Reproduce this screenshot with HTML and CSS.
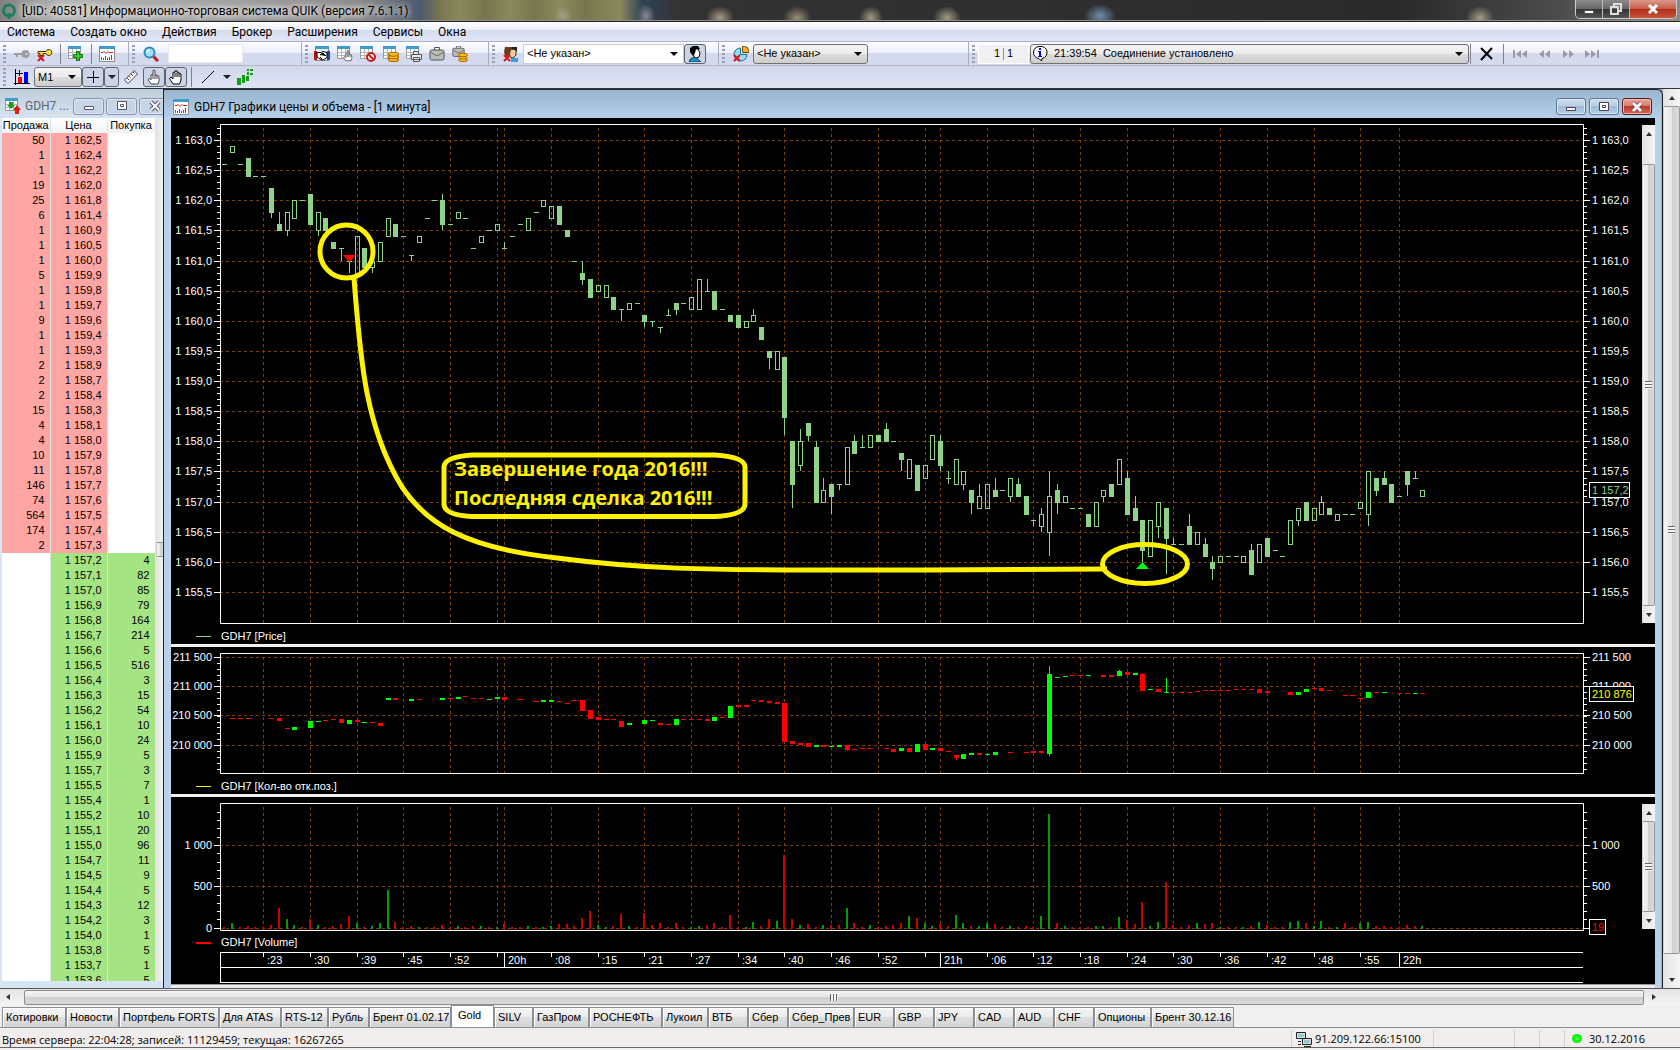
FILE: index.html
```html
<!DOCTYPE html>
<html lang="ru">
<head>
<meta charset="utf-8">
<title>QUIK</title>
<link rel="stylesheet" href="styles.css">
</head>
<body>
<svg class="defs" width="0" height="0" aria-hidden="true">
  <symbol id="i-chart" viewBox="0 0 16 16"><path fill="#fff" stroke="#8a8a8a" d="M.5.5h15v15H.5z"/><path fill="#3c9cd0" d="M0 0h16v3H0z"/><path fill="none" stroke="#d01818" d="M2 6.500h2l1-1 2 2 2-2 1 1h4"/><path stroke="#2060c0" d="M2.500 14v-3M4.500 14v-2M6.500 14v-4M8.500 14v-2M10.500 14v-3M12.500 14v-5"/></symbol>
  <symbol id="i-table" viewBox="0 0 16 16"><path fill="#fff" stroke="#9a9a9a" d="M.5.5h12v12H.5z"/><path fill="#3c9cd0" d="M0 0h13v3H0z"/><path stroke="#b4b4b4" d="M1 6.500h11M1 9.500h11M4.500 3v9M8.500 3v9"/></symbol>
  <symbol id="i-coins" viewBox="0 0 10 10"><g fill="#ffc01e" stroke="#a86400"><ellipse cx="5" cy="8" rx="4.500" ry="1.600"/><ellipse cx="5" cy="5.500" rx="4.500" ry="1.600"/><ellipse cx="5" cy="3" rx="4.500" ry="1.800"/></g></symbol>
  <symbol id="i-case" viewBox="0 0 16 16"><path fill="none" stroke="#555" d="M5.500 4V1.500h5V4"/><rect x="1" y="4" width="14" height="10" rx="1.500" fill="#b9bfb6" stroke="#555"/><path fill="none" stroke="#666" d="M1 6l7 4 7-4"/></symbol>
  <symbol id="i-redx" viewBox="0 0 8 8"><path stroke="#d8141c" stroke-width="2" d="M1 1l6 6M7 1L1 7"/></symbol>
  <symbol id="i-palm" viewBox="0 0 16 16"><path fill="#fff" stroke="#000" d="M5 15L1.500 9.500 3 8l2 2V3.500q1-1 2 0V2q1-1 2 0v1.500q1-1 2 0V5q1-1 2 0v6L11.500 15z"/><path stroke="#000" d="M7 4v4M9 4v4M11 5v3"/></symbol>
  <symbol id="i-finger" viewBox="0 0 16 16"><path fill="#fff" stroke="#444" d="M5 15L2 10.500 3.500 9.500 5 11V6q1-1 2 0V1.500q1-1 2 0V6l2 .5q2 0 2 2V12l-1 3z"/><path stroke="#444" d="M7 6v4M9 6v4M11 7v3"/></symbol>
</svg>

<header class="titlebar">
  <svg class="logo" viewBox="0 0 16 16" aria-hidden="true"><circle cx="8" cy="7.500" r="5.500" fill="none" stroke="#1f8060" stroke-width="3"/><path stroke="#1f8060" stroke-width="3" d="M8 10v6"/></svg>
  <h1>[UID: 40581] Информационно-торговая система QUIK (версия 7.6.1.1)</h1>
  <div class="caption">
    <button aria-label="Свернуть"><svg viewBox="0 0 16 12"><path fill="#fff" stroke="#555" d="M3.500 7.500h9v3h-9z"/></svg></button>
    <button aria-label="Восстановить"><svg viewBox="0 0 16 12"><path fill="none" stroke="#ddd" stroke-width="2" d="M6 3V1h7v7h-2M3 4h7v7H3z"/></svg></button>
    <button class="close" aria-label="Закрыть"><svg viewBox="0 0 16 12"><path stroke="#fff" stroke-width="3" d="M4 2l8 8M12 2l-8 8"/></svg></button>
  </div>
</header>

<nav class="menu">
  <a href="#">Система</a><a href="#">Создать окно</a><a href="#">Действия</a><a href="#">Брокер</a><a href="#">Расширения</a><a href="#">Сервисы</a><a href="#">Окна</a>
</nav>

<div class="toolbar">
  <div class="group g-keys">
    <button aria-label="Подключить"><svg viewBox="0 0 16 16"><path fill="#9d9d9d" d="M0 7h8v2H4v2H2V9H0z"/><circle cx="11.500" cy="8" r="4" fill="#9d9d9d"/><circle cx="12.500" cy="8" r="1" fill="#dde"/></svg></button>
    <button aria-label="Отключить"><svg viewBox="0 0 16 16"><path fill="#ffe040" stroke="#443300" d="M1 5.500h8a3 3 0 1 1 0 2H6v2H3v-2H1z"/><use href="#i-redx" x="0" y="8" width="8" height="8"/></svg></button>
    <i class="sep"></i>
    <button aria-label="Создать таблицу"><svg viewBox="0 0 16 16"><use href="#i-table" width="16" height="16"/><path fill="#3cc832" stroke="#0c6e0c" d="M8.500 5.500h3v3h3v3h-3v3h-3v-3h-3v-3h3z"/></svg></button>
    <i class="sep"></i>
    <button aria-label="Создать график"><svg viewBox="0 0 16 16"><use href="#i-chart" width="16" height="16"/></svg></button>
  </div>
  <div class="group g-find">
    <svg class="ico" viewBox="0 0 16 16"><path stroke="#c01818" stroke-width="3" d="M10 10l5 5"/><circle cx="6.500" cy="6.500" r="5" fill="#9fe2fa" stroke="#2a8cc0" stroke-width="2"/><path stroke="#fff" stroke-width="2" d="M4 6l2-2"/></svg>
    <input class="find" type="text" aria-label="Поиск">
  </div>
  <div class="group g-trade">
    <button aria-label="Сделки"><svg viewBox="0 0 16 16"><path fill="#e8f2fa" stroke="#888" d="M1.500.5h13v14h-13z"/><path fill="#3c9cd0" d="M1 0h14v3H1z"/><path fill="#b01818" d="M0 5h3v9H0z"/><path fill="#1a4ab0" d="M13 5h3v9h-3z"/><path fill="#fff" stroke="#000" d="M3 6.500h4l2-1 4 1v5l-4 2.500-3-1-3-2z"/><path stroke="#000" d="M6 9l3-2 3 3M6 11l2 2"/></svg></button>
    <button aria-label="Заявка"><svg viewBox="0 0 16 16"><use href="#i-table" width="16" height="16"/><use href="#i-finger" x="5" y="3" width="12" height="13"/></svg></button>
    <button aria-label="Снять заявку"><svg viewBox="0 0 16 16"><use href="#i-table" width="16" height="16"/><circle cx="11" cy="11" r="4" fill="#fff" stroke="#d01c1c" stroke-width="2"/><path stroke="#d01c1c" stroke-width="2" d="M8 8l6 6"/></svg></button>
    <button aria-label="Деньги"><svg viewBox="0 0 16 16"><use href="#i-table" width="16" height="16"/><use href="#i-coins" x="5" y="5" width="11" height="11"/></svg></button>
    <button aria-label="Печать"><svg viewBox="0 0 16 16"><use href="#i-table" width="16" height="16"/><path fill="#e8e8e8" stroke="#555" d="M7.500 8.500v-3h5v3M5.500 8.500h10v5h-10zM7.500 11.500h6v4h-6z"/></svg></button>
    <button aria-label="Портфель"><svg viewBox="0 0 16 16"><use href="#i-case" width="16" height="16"/></svg></button>
    <button aria-label="Купить или продать"><svg viewBox="0 0 16 16"><use href="#i-case" y="-1" width="13" height="13"/><use href="#i-coins" x="6" y="6" width="10" height="10"/></svg></button>
  </div>
  <div class="group g-client">
    <svg class="ico" viewBox="0 0 16 16"><path fill="#f3c9a0" stroke="#333" d="M5 3h8v6l-3 3-3-1z"/><path fill="#6b3c18" d="M2 1h7l3 2-4 1-1 4-4 3-2-5z"/><path fill="#222" d="M9 1h5v5l-2-2-3-1z"/><path fill="#3c9cd0" d="M8 12h7v4H8z"/><use href="#i-redx" y="8" width="8" height="8"/></svg>
    <span class="combo plain w-client"><select aria-label="Клиент"><option>&lt;Не указан&gt;</option></select></span>
    <button class="pressed" aria-label="Фильтр клиента"><svg viewBox="0 0 16 16"><path fill="#fff" stroke="#000" d="M6 3h5l2 4-1 4-3 1-2-1z"/><path fill="#000" d="M3 2l3-2h5l2 3H9L8 7 6 10 3 6z"/><path fill="#1c90b8" stroke="#000" stroke-width=".5" d="M2 16l1-3 4-2 4 2 3 3z"/></svg></button>
  </div>
  <div class="group g-account">
    <svg class="ico" viewBox="0 0 16 16"><path fill="#8fe0f5" stroke="#2a6f8c" d="M7.500 2v6.500H14a6.500 6.500 0 1 1-6.500-6.500z"/><path fill="#ffb428" stroke="#704800" d="M9.500.5h2a4 4 0 0 1 4 4v2h-6z"/><use href="#i-redx" y="8" width="8" height="8"/></svg>
    <span class="combo w-account"><select aria-label="Счёт"><option>&lt;Не указан&gt;</option></select></span>
  </div>
  <div class="group g-status">
    <span class="count">1 <i></i> 1</span>
    <span class="combo w-status">
      <svg class="bubble" viewBox="0 0 16 16"><path fill="#fff" stroke="#000" d="M8 .5a6 6 0 0 1 2 12L9.500 15 7 12.500A6 6 0 0 1 8 .5z"/><path fill="#00f" d="M7 2h2v2H7zM6 5h3v5h1v1H6v-1h1V6H6z"/></svg>
      <select aria-label="Сообщения"><option>21:39:54&nbsp; Соединение установлено</option></select></span>
    <i class="sep"></i>
    <button aria-label="Удалить"><svg viewBox="0 0 16 16"><path stroke="#000" stroke-width="2" d="M2 2l11 11M13 2L2 14"/></svg></button>
    <i class="sep"></i>
    <button aria-label="Первое"><svg viewBox="0 0 16 16"><path fill="#9a9aa6" d="M1 4h2v8H1zM9 4v8L4 8zM15 4v8l-5-4z"/></svg></button>
    <button aria-label="Назад"><svg viewBox="0 0 16 16"><path fill="#9a9aa6" d="M8 4v8L3 8zM14 4v8L9 8z"/></svg></button>
    <button aria-label="Вперёд"><svg viewBox="0 0 16 16"><path fill="#9a9aa6" d="M3 4v8l5-4zM9 4v8l5-4z"/></svg></button>
    <button aria-label="Последнее"><svg viewBox="0 0 16 16"><path fill="#9a9aa6" d="M1 4v8l5-4zM7 4v8l5-4zM13 4h2v8h-2z"/></svg></button>
  </div>
</div>

<div class="toolbar second">
  <div class="group g-draw">
    <svg class="ico" viewBox="0 0 16 16"><path stroke="#000" d="M1.500 0v16M0 14.500h16"/><path fill="#f00" d="M4 8h4v6H4z"/><path fill="#00f" d="M10 3h4v11h-4z"/><path stroke="#000" d="M5.500 1v6M2 4.500h7"/></svg>
    <span class="combo w-frame"><select aria-label="Интервал"><option>M1</option></select></span>
    <button class="pressed" aria-label="Перекрестие"><svg viewBox="0 0 16 16"><path stroke="#000" d="M8.500 2v12M2 8.500h12"/></svg></button>
    <button class="pressed drop" aria-label="Вид перекрестия"></button>
    <button class="gap" aria-label="Линейка"><svg viewBox="0 0 16 16"><path fill="#fff" stroke="#444" d="M1.500 11L11 1.500l3.500 3.500L5 14.500z"/><path stroke="#444" d="M4 9l2 2M6 7l1.500 1.500M8 5l2 2M10 3l1.500 1.500"/></svg></button>
    <button class="pressed gap" aria-label="Указатель"><svg viewBox="0 0 16 16"><use href="#i-finger" width="16" height="16"/></svg></button>
    <button class="pressed" aria-label="Рука"><svg viewBox="0 0 16 16"><use href="#i-palm" width="16" height="16"/></svg></button>
    <i class="sep"></i>
    <button class="gap" aria-label="Линия"><svg viewBox="0 0 16 16"><path stroke="#000" d="M2 14L14 2"/></svg></button>
    <button class="drop" aria-label="Виды линий"></button>
    <button aria-label="Индикаторы"><svg viewBox="0 0 16 16"><path fill="#12a012" d="M0 9h4v7H0zM5 6h3v8H5zM9 7h3v5H9zM10 0h2v2h-2zM13 0h3v2h-3zM10 3h2v3h-2zM13 4h3v2h-3z"/></svg></button>
  </div>
</div>

<main class="mdi">
  <section class="book">
    <div class="wtitle">
      <svg class="ico" viewBox="0 0 16 16"><use href="#i-table" width="16" height="16"/><path fill="#18a018" d="M4 4h4v3h2L6 11 2 7h2z"/><path fill="#e01c1c" d="M10 16v-4H8l4-5 4 5h-2v4z"/></svg>
      <h2>GDH7 ...</h2>
      <button aria-label="Свернуть"><svg viewBox="0 0 16 12"><path fill="#fff" stroke="#556" d="M3.500 6.500h9v3h-9z"/></svg></button>
      <button aria-label="Развернуть"><svg viewBox="0 0 16 12"><path fill="#fff" stroke="#556" d="M3.500 1.500h9v8h-9zM6.500 4.500h3v2h-3z"/></svg></button>
      <button aria-label="Закрыть"><svg viewBox="0 0 16 12"><path stroke="#556" stroke-width="4" d="M4 2l8 8M12 2l-8 8"/><path stroke="#fff" stroke-width="2" d="M4 2l8 8M12 2l-8 8"/></svg></button>
    </div>
    <div class="quotes">
      <table>
        <thead><tr><th>Продажа</th><th>Цена</th><th>Покупка</th></tr></thead>
        <tbody id="quotes"></tbody>
      </table>
      <div class="vscroll slim"><i class="thumb"></i></div>
    </div>
  </section>

  <section class="chartwin">
    <div class="wtitle">
      <svg class="ico" viewBox="0 0 16 16"><use href="#i-chart" width="16" height="16"/></svg>
      <h2>GDH7 Графики цены и объема - [1 минута]</h2>
      <button aria-label="Свернуть"><svg viewBox="0 0 16 12"><path fill="#fff" stroke="#445" d="M3.500 6.500h9v3h-9z"/></svg></button>
      <button aria-label="Развернуть"><svg viewBox="0 0 16 12"><path fill="#fff" stroke="#445" d="M3.500 1.500h9v8h-9zM6.500 4.500h3v2h-3z"/></svg></button>
      <button class="close" aria-label="Закрыть"><svg viewBox="0 0 16 12"><path stroke="#623" stroke-width="4" d="M4 2l8 8M12 2l-8 8"/><path stroke="#fff" stroke-width="3" d="M4 2l8 8M12 2l-8 8"/></svg></button>
    </div>
    <div class="charts">
      <div class="panel price"><svg id="price"></svg><div class="vscroll"><i class="up"></i><i class="thumb"></i><i class="down"></i></div></div>
      <div class="panel interest"><svg id="interest"></svg></div>
      <div class="panel volume"><svg id="volume"></svg><div class="vscroll"><i class="up"></i><i class="thumb"></i><i class="down"></i></div></div>
      <div class="edge"></div>
    </div>
  </section>
  <div class="vscroll outer"><i class="up"></i><i class="thumb"></i><i class="down"></i></div>
</main>

<div class="hscroll"><i class="left"></i><i class="thumb"></i><i class="right"></i></div>

<nav class="tabs">
  <a href="#">Котировки</a><a href="#">Новости</a><a href="#">Портфель FORTS</a><a href="#">Для ATAS</a><a href="#">RTS-12</a><a href="#">Рубль</a><a href="#">Брент 01.02.17</a><a href="#" class="on">Gold</a><a href="#">SILV</a><a href="#">ГазПром</a><a href="#">РОСНЕФТЬ</a><a href="#">Лукоил</a><a href="#">ВТБ</a><a href="#">Сбер</a><a href="#">Сбер_Прев</a><a href="#">EUR</a><a href="#">GBP</a><a href="#">JPY</a><a href="#">CAD</a><a href="#">AUD</a><a href="#">CHF</a><a href="#">Опционы</a><a href="#">Брент 30.12.16</a>
</nav>

<footer class="status">
  <span class="server">Время сервера: 22:04:28; записей: 11129459; текущая: 16267265</span>
  <span class="net"><svg viewBox="0 0 16 16"><path fill="#ddd" stroke="#222" d="M.5 1.500h9v6h-9zM6.500 7.500h9v6h-9z"/><path fill="#8fc8dc" d="M2 3h6v3H2zM8 9h6v3H8z"/><path stroke="#222" d="M2 10.500h3M2 13.500h3M8 15.500h7"/></svg>91.209.122.66:15100</span>
  <span class="cell"></span><span class="cell small"></span><span class="cell small"></span>
  <span class="date"><i></i>30.12.2016</span>
</footer>
<script src="chart.js"></script>
</body>
</html>
```
FILE: styles.css
```css
* { box-sizing: border-box; }
body {
  margin: 0;
  min-height: 100vh;
  display: flex;
  flex-direction: column;
  background: #f0f0f0;
  color: #000;
  font: 11px/15px "Liberation Sans", Arial, sans-serif;
  overflow: hidden;
}
a { color: inherit; text-decoration: none; }
i { font-style: normal; }
button { border: 0; padding: 0; background: none; display: flex; align-items: center; justify-content: center; }
h1, h2 { margin: 0; font: 12px/16px Roboto, "Noto Sans", sans-serif; white-space: nowrap; }
svg { display: block; flex: none; }
.defs { position: absolute; }

/* application title bar */
.titlebar {
  height: 22px;
  display: flex;
  align-items: flex-start;
  border-bottom: 1px solid #222;
  box-shadow: inset 0 -1px #8e8e8e;
  background:
    radial-gradient(ellipse 9px 10px at 563px 16px, #a59c84, transparent),
    radial-gradient(ellipse 9px 12px at 646px 16px, #8a8a90, transparent),
    radial-gradient(ellipse 14px 12px at 720px 18px, #a39b82, transparent),
    radial-gradient(ellipse 14px 12px at 797px 18px, #998f78, transparent),
    radial-gradient(ellipse 12px 12px at 871px 18px, #a39b82, transparent),
    radial-gradient(ellipse 14px 12px at 947px 18px, #a39b82, transparent),
    radial-gradient(ellipse 16px 12px at 1100px 16px, #6f8fae, transparent),
    radial-gradient(ellipse 14px 12px at 1480px 18px, #a39b82, transparent),
    linear-gradient(90deg, #808080, #b4b4b4 60px, #a0a0a0 240px, #8c8c8c 360px, #4c5a70 420px, #77764e 440px, #8b895c 460px, #77764e 485px, #8b895c 510px, #77764e 535px, #8b895c 560px, #77764e 585px, #8b895c 620px, #2f4356 642px, #333 680px, #2a2a2a 1400px, #4c4c4c 1560px, #8a8a8a);
}
.logo { width: 16px; height: 16px; margin: 3px 5px 0 1px; }
.titlebar h1 { flex: 1; padding-top: 3px; text-shadow: 0 0 6px #fff, 0 0 6px #fff; }
.caption { display: flex; margin-right: 3px; border: 1px solid #ccc; border-top: 0; border-radius: 0 0 5px 5px; overflow: hidden; }
.caption button { width: 27px; height: 18px; background: linear-gradient(#8a8a8a, #666 50%, #333 50%, #555); border-right: 1px solid #bbb; }
.caption button.close { width: 46px; border: 0; background: linear-gradient(#d99a8c, #c75a48 50%, #b02c14 50%, #c8553c); }
.caption svg { width: 16px; height: 12px; }

/* menu and toolbars */
.menu {
  height: 20px;
  display: flex;
  gap: 15px;
  padding: 2px 7px 0;
  background: linear-gradient(#fff, #eef1fa 40%, #d5dbee 40%, #e0e5f6);
  border-bottom: 1px solid #aeb4cc;
  font: 12px/16px Roboto, "Noto Sans", sans-serif;
  white-space: nowrap;
}
.toolbar { height: 24px; display: flex; background: linear-gradient(#fdfdff, #eceffa 45%, #d3d9ed 45%, #d6dcf0); }
.toolbar.second { height: 23px; background: linear-gradient(#d0d7ec, #dfe4f5); border-bottom: 1px solid #30343c; }
.group { display: flex; align-items: center; flex: none; border-right: 1px solid #a9adb8; border-bottom: 1px solid #b4b8c4; padding-left: 3px; }
.group::before { content: ""; width: 3px; height: 18px; flex: none; margin-right: 6px; background: repeating-linear-gradient(#9aa0b4 0 2px, transparent 2px 4px); }
.second .group { border: 0; }
.g-keys { width: 129px; gap: 7px; }
.g-keys::before { margin-right: 1px; }
.g-find { width: 173px; gap: 9px; }
.g-find::before { margin-right: -1px; }
.g-trade { width: 187px; gap: 7px; }
.g-trade::before { margin-right: -1px; }
.g-client { width: 230px; }
.g-client::before { margin-right: 8px; }
.g-client .ico { margin-right: 4px; }
.g-account { width: 250px; }
.g-account .ico { margin: 0 4px 0 2px; }
.g-status { flex: 1; padding-right: 72px; border-right: 0; }
.g-status::before { margin-right: 3px; }
.g-status button { margin-right: 8px; }
.g-status .sep + button { margin-left: 8px; }
.group button svg, .ico { width: 16px; height: 16px; flex: none; }
.sep { width: 1px; height: 20px; background: #7d828e; flex: none; }
.find { width: 75px; height: 19px; border: 1px solid #e6e8f0; background: #fff; padding: 0 2px; }
.combo { display: flex; align-items: center; position: relative; height: 20px; border: 1px solid #707070; border-radius: 3px; background: linear-gradient(#f3f3f3, #ebebeb 50%, #dcdcdc 50%, #cdcdcd); flex: none; }
.combo.plain { background: #fff; border-color: #c9cdd8; border-radius: 0; }
.combo select { flex: 1; min-width: 0; appearance: none; border: 0; background: none; color: #000; font: inherit; font-size: 11px; padding: 0 4px 0 3px; margin: 0; outline: 0; }
.combo::after { content: ""; border: 4px solid transparent; border-top-color: #000; border-bottom: 0; margin-right: 5px; }
.w-client { width: 161px; }
.w-account { width: 115px; }
.w-status { flex: 1; margin-right: 1px; }
.w-status select { padding-left: 6px; }
.bubble { width: 16px; height: 16px; margin-left: 1px; }
.w-frame { width: 48px; margin-left: 4px; }
.count { width: 51px; height: 20px; margin-right: 1px; display: flex; gap: 3px; align-items: center; justify-content: center; background: #f0f0f2; border: 1px solid #fff; }
.count i { width: 1px; height: 12px; background: #b08080; }
.pressed { width: 22px; height: 20px; border: 1px solid #5c6474; border-radius: 3px; background: #ccd3e4; }
.drop { width: 15px; }
.drop::after { content: ""; border: 4px solid transparent; border-top-color: #222; border-bottom: 0; }
.gap { margin-left: 4px; }
.g-draw::before { margin-right: 8px; }
.g-draw .pressed + .sep { margin: 0 4px; }
.g-draw .drop:not(.pressed) { margin: 0 3px; }

/* work area */
.mdi { display: grid; grid-template-columns: 164px 1fr 17px; height: 900px; background: #a8a8a8; border-bottom: 1px solid #555; }
.wtitle { height: 29px; display: flex; align-items: center; gap: 3px; padding-top: 5px; }
.wtitle h2 { flex: 1; margin-left: 2px; }
.wtitle button { width: 30px; height: 17px; border: 1px solid #5f7593; border-radius: 3px; background: linear-gradient(#cbdcec, #b7cde3 50%, #9fbad6 50%, #b4cde6); box-shadow: inset 0 0 0 1px #dbe8f4; flex: none; }
.wtitle button svg { width: 16px; height: 12px; }
.wtitle button.close { border-color: #5a1a20; background: linear-gradient(#e8a79c, #d67868 50%, #bb3a28 50%, #d1685a); box-shadow: inset 0 0 0 1px #ecb8ae; }
.book { min-width: 0; overflow: hidden; background: #d7e4f2; border-right: 1px solid #222; padding: 0 0 7px 2px; display: flex; flex-direction: column; }
.book .wtitle { background: linear-gradient(#bfcddb, #d6e4f1); margin-left: -2px; padding-left: 5px; gap: 2px; }
.book .wtitle h2 { flex: none; width: 46px; color: #5c6670; }
.book .wtitle button { background: #c7d6e6; border-color: #8795a8; width: 31px; }
.quotes { flex: 1; min-height: 0; overflow: hidden; display: flex; background: #fff; }
.quotes table { width: 153px; flex: none; border-collapse: collapse; table-layout: fixed; align-self: flex-start; }
.quotes th { height: 15px; padding: 0; font-weight: 400; background: linear-gradient(#fff, #f1f2f4); border-right: 1px solid #dfe3e8; }
.quotes th:first-child { width: 48px; }
.quotes th:nth-child(2) { width: 57px; }
.quotes th:nth-child(3) { width: 48px; }
.quotes td { height: 15px; padding: 0 5px 0 0; text-align: right; border-right: 1px solid #dde6dd; white-space: nowrap; }
.quotes .sell td:nth-child(-n+2) { background: #ffa6a4; }
.quotes .buy td:nth-child(n+2) { background: #a5e482; }

.chartwin { min-width: 0; display: flex; flex-direction: column; background: #b9d1ea; border: solid; border-width: 1px 1px 0 0; border-color: #222; border-top-right-radius: 6px; padding: 0 7px 0 7px; box-shadow: inset -1px 0 #4ad0ec; }
.chartwin .wtitle { height: 28px; margin: 0 -6px 0 -7px; padding: 5px 9px 0; background: linear-gradient(#9ab4d0, #b5d0ea); border-top-right-radius: 5px; gap: 3px; }
.charts { flex: 1; display: flex; flex-direction: column; background: #000; }
.panel { display: flex; }
.panel svg { flex: 1; min-width: 0; height: 100%; }
.price { height: 529px; border-bottom: 3px solid #f0f0f0; }
.interest { height: 150px; border-bottom: 3px solid #f0f0f0; padding-right: 13px; }
.volume { height: 187px; }
.edge { flex: 1; background: #ececec; border-top: 1px solid #999; }
.price .vscroll { margin: 7px 0 21px; }
.price .vscroll .thumb { margin-top: 22px; }
.volume .vscroll { margin: 7px 0 55px; }
#price text, #interest text, #volume text { fill: #fff; font: 11px "Liberation Sans", Arial, sans-serif; }
#price text.note { fill: #fff200; font: bold 20px "Open Sans", "Noto Sans", sans-serif; }
#price text.t-price { fill: #8fd388; }
#interest text.t-interest { fill: #ff0; }
#volume text.t-volume { fill: #f00; }
svg .r { text-anchor: end; }

/* scroll bars */
.vscroll { width: 13px; flex: none; display: flex; flex-direction: column; align-items: center; background: linear-gradient(90deg, #e4e4e4, #f4f4f4); }
.vscroll .thumb { flex: 1; width: 100%; border: 1px solid #979797; border-left-color: #ccc; border-radius: 2px; background: linear-gradient(90deg, #f4f4f4, #e6e6e6 50%, #cfcfcf 50%, #dadada); display: flex; align-items: center; justify-content: center; }
.vscroll .thumb::after { content: ""; width: 7px; height: 8px; background: repeating-linear-gradient(#666 0 1px, #f5f5f5 1px 3px); }
.up, .down { height: 17px; display: flex; align-items: center; }
.up::after, .down::after { content: ""; border: 3px solid transparent; }
.up::after { border-bottom: 4px solid #333; border-top: 0; }
.down::after { border-top: 4px solid #333; border-bottom: 0; }
.outer { width: 17px; }
.outer .down { height: 34px; align-items: center; }
.outer .down::after { margin-top: 18px; }
.slim { width: 8px; margin-left: auto; justify-content: center; }
.slim .thumb { flex: none; height: 15px; }
.slim .thumb::after { display: none; }
.hscroll { height: 16px; display: flex; align-items: center; padding-right: 17px; background: linear-gradient(#e4e4e4, #f4f4f4); }
.hscroll .thumb { flex: 1; height: 15px; border: 1px solid #8c8c8c; border-radius: 2px; background: linear-gradient(#f4f4f4, #e6e6e6 50%, #cfcfcf 50%, #dadada); display: flex; align-items: center; justify-content: center; }
.hscroll .thumb::after { content: ""; width: 8px; height: 7px; background: repeating-linear-gradient(90deg, #666 0 1px, #f5f5f5 1px 3px); }
.left, .right { width: 24px; display: flex; justify-content: center; }
.right { width: 19px; }
.left::after, .right::after { content: ""; border: 3px solid transparent; }
.left::after { border-right: 4px solid #333; border-left: 0; margin-right: 8px; }
.right::after { border-left: 4px solid #333; border-right: 0; }

/* sheet tabs */
.tabs {
  height: 23px;
  display: grid;
  grid-template-columns: 64px 53px 100px 62px 47px 41px 82px 43px 39px 56px 73px 46px 40px 40px 66px 40px 40px 40px 40px 40px 40px 57px 83px;
  align-items: end;
  padding-left: 2px;
  background: #f0f0f0;
  border-bottom: 1px solid #8a8f9a;
}
.tabs a { height: 20px; padding: 2px 0 0 3px; border: 1px solid #8a8f9a; border-bottom: 0; background: linear-gradient(#f4f4f4, #ececec 50%, #dedede 50%, #d4d4d4); box-shadow: inset 1px 1px #fff; white-space: nowrap; overflow: hidden; }
.tabs a.on { height: 22px; padding-left: 6px; background: #fff; }

/* status line */
.status { height: 20px; display: flex; background: #f1edec; border-bottom: 1px solid #666; font: 11px/20px "Open Sans", "Noto Sans", sans-serif; white-space: nowrap; padding-top: 2px; }
.server { flex: 1; padding-left: 2px; }
.net { width: 142px; display: flex; gap: 3px; align-items: center; padding-left: 4px; border-left: 1px solid #d4d0d0; }
.net svg { width: 16px; height: 16px; }
.cell { width: 81px; border-left: 1px solid #d4d0d0; }
.cell.small { width: 25px; }
.date { width: 116px; display: flex; align-items: center; gap: 7px; padding-left: 7px; border-left: 1px solid #d4d0d0; }
.date i { width: 10px; height: 9px; border-radius: 50%; background: radial-gradient(#6f6, #0f0 50%, #0c0); }
```
FILE: chart.js
```js
// Order book: volume at price, asks first, then bids.
const asks = '50 1162,5|1 1162,4|1 1162,2|19 1162,0|25 1161,8|6 1161,4|1 1160,9|1 1160,5|1 1160,0|5 1159,9|1 1159,8|1 1159,7|9 1159,6|1 1159,4|1 1159,3|2 1158,9|2 1158,7|2 1158,4|15 1158,3|4 1158,1|4 1158,0|10 1157,9|11 1157,8|146 1157,7|74 1157,6|564 1157,5|174 1157,4|2 1157,3';
const bids = '4 1157,2|82 1157,1|85 1157,0|79 1156,9|164 1156,8|214 1156,7|5 1156,6|516 1156,5|3 1156,4|15 1156,3|54 1156,2|10 1156,1|24 1156,0|5 1155,9|3 1155,7|7 1155,5|1 1155,4|10 1155,2|20 1155,1|96 1155,0|11 1154,7|9 1154,5|5 1154,4|12 1154,3|3 1154,2|1 1154,0|5 1153,8|1 1153,7|5 1153,6';
const spaced = p => p[0] + ' ' + p.slice(1);
const rows = (src, cls) => src.split('|').map(r => {
  const [q, p] = r.split(' ');
  return cls === 'sell'
    ? `<tr class="sell"><td>${q}</td><td>${spaced(p)}</td><td></td></tr>`
    : `<tr class="buy"><td></td><td>${spaced(p)}</td><td>${q}</td></tr>`;
}).join('');
document.getElementById('quotes').innerHTML = rows(asks, 'sell') + rows(bids, 'buy');

// Price candles, one per minute: kind (f falling, h rising, d flat), body top,
// body bottom, high, low; values are tenths above 1150.
const price = ('d126 h129,128 d126 f127,124 d124 d124 f122,118,,117 f116,115,118 h118,115,,114 h120,117 d120 f121,116 h118,115,,114 f117,115 f113,112 d112,,,110 d110,,,108 h114,108 f112,109 h110,109,,108 h113,110 h117,114 f116,114 d114 d111,,,110 h114,113 d117 d120 f120,116,121,115 d116 ' +
  'h118,117 d117 d112 h114,113 d115 h116,115 d112,,113 d114 d116 h117,115 d118 h120,119 h119,117 f119,116 f115,114 d110 f108,107,110,106 f107,104 h106,105 h106,104 f104,102 d102,,,100 h103,102 d103 f101,100,,99 d100,,,99 d99,,,98 d101,,102 f103,102,,101 d103 ' +
  'h104,102 h107,102 d105,,107 f105,102 d102 f101,100 f101,99 h100,99 h101,100,102 f99,97 f95,94,,92 h95,92 f94,84,,81 f80,73,,69 h80,76,82,75 f83,81,,80 f79,70,80 h72,70,74 f73,71,,68 d73,,,72 h79,73 f80,78,81 d79,,81 h81,79 f81,80 f82,80,83 d80 f78,77,,75 h77,74 f76,72 ' +
  'h76,74 h81,77 f80,76,81,75 d74,,75,73 h77,73 h75,73,,72 f72,70,,68 h71,69,73 h73,69 f72,71,74 d72 h74,71,,70 f73,71,74 f71,68 d67,,,66 h68,66,69,65 h71,65,75,61 f72,70,73,68 h71,70 d69 d69 f68,66 h70,66 h72,71,,70 f73,71 h77,73 f74,68,75 f69,67,71 f67,62,,60 h67,61 ' +
  'h70,66,,64 f69,64,,58 d63,,64 d63 f66,63,68 h65,63 f63,61,64 f60,59,61,57 h61,60 d61 d61 h61,60 f62,58,63 h63,60 f64,61 d62 d61 h67,63 h69,67,,66 f70,67 h69,67 h70,68,71 f69,68 h68,67 d68 d68 h70,69 h75,68,,66 f74,72,,71 f74,73,75 f73,70 d71 f75,73,,71 d74,,75 h72,71').split(' ');

// Open interest: minute, colour, body top, body bottom, high, low in panel rows.
const interest = '1r88 2r88 3r88 6r88 7r88,91 8r98 9g97,100 11g91,98 12g91 13r90 14r89 15r89,93 16g90,94 17r90,92 18g92 19r92 20r93,96 21g68,70 22r68,70 24g69,71 25r69 28g68,70 29r68 30g67,69 31r66 32r68 33r68 34g69 35g67,69 36r67,70 38r69 40r71 41g70,72 42g70,72 43r71 44r73 45r70 46r70,81 47r80,89 48r87,90 49r89 50r89 51r91,97 52g93,95 54g90,94 55g90 56r93,95 57r94 58g89,95 59r89 60r89 61r89 62r89,91 63g87,91 64r87 65g76,88 66r75,77 67r75,77 68r70 69r70,72 70r71,73 71r72,74 72r73,112 73r111,114 74r113,115 75r113,117 76g115,117 77r115,117 78g116 79g115,117 80r115,120,115,121 81r119 82r118 83r118 85r118 86r119,122 87g118,121 88r118,122 89g114,122 90r114,120 91g118,120 92r118,121 93r121 94r125,128,125,130 95g124,129 96g123,125 97r123,125 98g124 99g122,125 101r122 103r122 104r121,123 105r121,123,121,124 106g44,124,36,126 107g47 108g46 109r45 110r45 111g45 113r45,47 114r45,47 115g41,46,40,46 116r42,45 117g43,45 118r44,61,43,61 119g59 120r59,62 121g62,62,48,62 122r62 123r62 124r62 125r61 126r60 127r60 128r60 129r60 130r59 131r59 132r59 133r59,63 134r61,63 137r62,65 138g62,65 139g59,62 140r58 141r58,61 142r60 144r65 145r65 146r68 147g62,68 148r62 149g62 151r63 152r63 153g63 154r63'.split(' ');

// Volume columns: colour and height.
const volume = 'r2g6r2r3r2r2r4r21g10g4r2r10g4r2r3r5r13g6r2g3g6g39r7r2r3g2r2r2r4r2g3r2r3g3r2g2r5r2r2g3r2g2g3r5r5r3r11r18g4g2r3r15g3r2r16r4r6r2r6r2g2g3r4r6r2r14r2g2g7r3r10g8r74r10g4r5r2g4r4r4g21r6r2g4r2r3r4r6g13r11g6g3r5r3g14g6r3g3g6r5r2g3r2r3r2g13g115r6g3r2r2r2g3g3r2g12r9r5r27g3g7r47r4r2r4g6r5r6g2r2r2g2r3g7r4r2r2g7g8r6g3g8r2g2r6r2g6g7r3r3r2r2r4r3g3'.match(/[rg]\d+/g);

const marks = [[5, ':23'], [11, ':30'], [17, ':39'], [23, ':45'], [29, ':52'], [35, ''], [36, '20h'], [42, ':08'], [48, ':15'], [54, ':21'], [60, ':27'], [66, ':34'], [72, ':40'], [78, ':46'], [84, ':52'], [90, ''], [92, '21h'], [98, ':06'], [104, ':12'], [110, ':18'], [116, ':24'], [122, ':30'], [128, ':36'], [134, ':42'], [140, ':48'], [146, ':55'], [151, '22h']];

const LEFT = 49;
const slot = i => Math.round(53.3 + 7.78 * i);
const rect = (x, y, w, h, c) => `<rect x="${x}" y="${y}" width="${w}" height="${h}" fill="${c}"/>`;
const text = (x, y, s, c = '') => s && `<text x="${x}" y="${y + 4}" class="${c}">${s}</text>`;
const dash = (x1, y1, x2, y2) => `<path d="M${x1} ${y1}L${x2} ${y2}" stroke="#804000" stroke-dasharray="3 3"/>`;

// Plot frame with grid, ticks and labels; a level is [y, left label, right label].
function frame(top, bottom, right, levels, step) {
  let s = '';
  for (const [i] of marks) s += dash(slot(i) + 0.5, top + 4, slot(i) + 0.5, bottom);
  for (const [y, label, other = label] of levels) {
    s += dash(LEFT, y + 0.5, right, y + 0.5);
    s += rect(LEFT - 6, y, 6, 1, '#fff') + rect(right, y, 7, 1, '#fff');
    s += text(LEFT - 8, y, label, 'r') + text(right + 9, y, other);
  }
  for (let k = -60; k < 60; k++) {
    const y = Math.round(levels[0][0] + k * step);
    if (y > top + 1 && y < bottom) s += rect(LEFT - 3, y, 3, 1, '#fff') + rect(right, y, 4, 1, '#fff');
  }
  return s + `<path d="M${LEFT}.5 ${top}.5H${right}.5V${bottom}.5H${LEFT}.5z" fill="none" stroke="#fff"/>`;
}
const tag = (x, y, w, label, c) =>
  `<rect x="${x}.5" y="${y - 8}.5" width="${w}" height="15" fill="#000" stroke="#fff"/>` + text(x + 3, y, label, c);
const legend = (y, c, h, label) => rect(25, y, 15, h, c) + text(50, y, label);

function drawPrice(svg) {
  const right = svg.clientWidth - 59;
  const Y = v => Math.round(22 + (130 - v) * 6.027);
  const levels = [];
  for (let v = 130; v >= 55; v -= 5) levels.push([Y(v), '1 1' + (500 + v).toString().replace(/(\d)$/, ',$1')]);
  let s = frame(6, 505, right, levels, 6.027);
  const g = '#8fd388';
  price.forEach((row, i) => {
    const [top, bot, hi, lo] = row.slice(1).split(',').map(n => n === '' ? undefined : +n);
    const x = slot(i), yt = Y(top), yb = Y(bot ?? top);
    if (hi) s += rect(x, Y(hi), 1, yt - Y(hi), g);
    if (lo) s += rect(x, yb, 1, Y(lo) - yb, g);
    if (row[0] === 'd') s += rect(x - 2, yt, 5, 1, g);
    else if (row[0] === 'f') s += rect(x - 2, yt, 5, yb - yt + 1, g);
    else s += `<rect x="${x - 1.5}" y="${yt + 0.5}" width="4" height="${yb - yt}" fill="none" stroke="${g}"/>`;
  });
  s += '<path d="M172 137h13l-6.500 7z" fill="#f00"/><path d="M965 451h13l-6.500-7z" fill="#0f0"/>';
  s += '<g fill="none" stroke="#fff200" stroke-width="5"><circle cx="175.500" cy="133.500" r="26.500"/><ellipse cx="974" cy="446" rx="42.500" ry="19.500"/>';
  s += '<path d="M183 160C189 235 193 307 231 369C255 405 293 430 386 440C470 451 540 452 640 452C740 452 830 452 936 451"/>';
  s += '<path d="M301 337H544Q574 339 574 349V386Q574 397 544 398.500H301Q273 397 273 386V349Q273 339 301 337z"/></g>';
  s += '<text class="note" x="283" y="358">Завершение года 2016!!!</text><text class="note" x="283" y="387">Последняя сделка 2016!!!</text>';
  s += legend(518, g, 1, 'GDH7 [Price]') + tag(right + 6, 372, 40, '1 157,2', 't-price');
  svg.innerHTML = s;
}

function drawInterest(svg) {
  const right = svg.clientWidth - 59;
  let s = frame(6, 126, right, [[10, '211 500'], [39, '211 000'], [68, '210 500'], [98, '210 000']], 5.87);
  for (const row of interest) {
    const m = row.match(/^(\d+)([rg])(.+)$/);
    const [a, b, hi, lo] = m[3].split(',').map(Number);
    const x = slot(+m[1]), c = m[2] === 'r' ? '#f00' : '#0f0', o = 17;
    s += rect(x - 2, a - o, 5, b ? Math.max(1, b - a) : 1, c);
    if (hi) s += rect(x, hi - o, 1, lo - hi, c);
  }
  s += legend(139, '#ff0', 1, 'GDH7 [Кол-во отк.поз.]') + tag(right + 6, 47, 44, '210 876', 't-interest');
  svg.innerHTML = s;
}

function drawVolume(svg) {
  const right = svg.clientWidth - 59;
  let s = frame(6, 133, right, [[48, '1 000'], [89, '500'], [131, '0', '']], 8.27);
  volume.forEach((row, i) => {
    const h = +row.slice(1);
    s += rect(slot(i) - 1, 132 - h, 2, h, row[0] === 'r' ? '#c80000' : '#00a000');
  });
  s += legend(145, '#f00', 2, 'GDH7 [Volume]') + tag(right + 6, 130, 16, '19', 't-volume');
  s += rect(LEFT, 155, right - LEFT, 1, '#fff') + rect(LEFT, 170, right - LEFT, 1, '#fff') + rect(LEFT, 185, right - LEFT, 1, '#fff') + rect(LEFT, 155, 1, 31, '#fff');
  for (const [i, label] of marks) {
    s += rect(slot(i), 155, 1, label.endsWith('h') ? 15 : 5, '#fff') + text(slot(i) + 4, 163, label);
  }
  svg.innerHTML = s;
}

function draw() {
  drawPrice(document.getElementById('price'));
  drawInterest(document.getElementById('interest'));
  drawVolume(document.getElementById('volume'));
}
draw();
addEventListener('resize', draw);
```
